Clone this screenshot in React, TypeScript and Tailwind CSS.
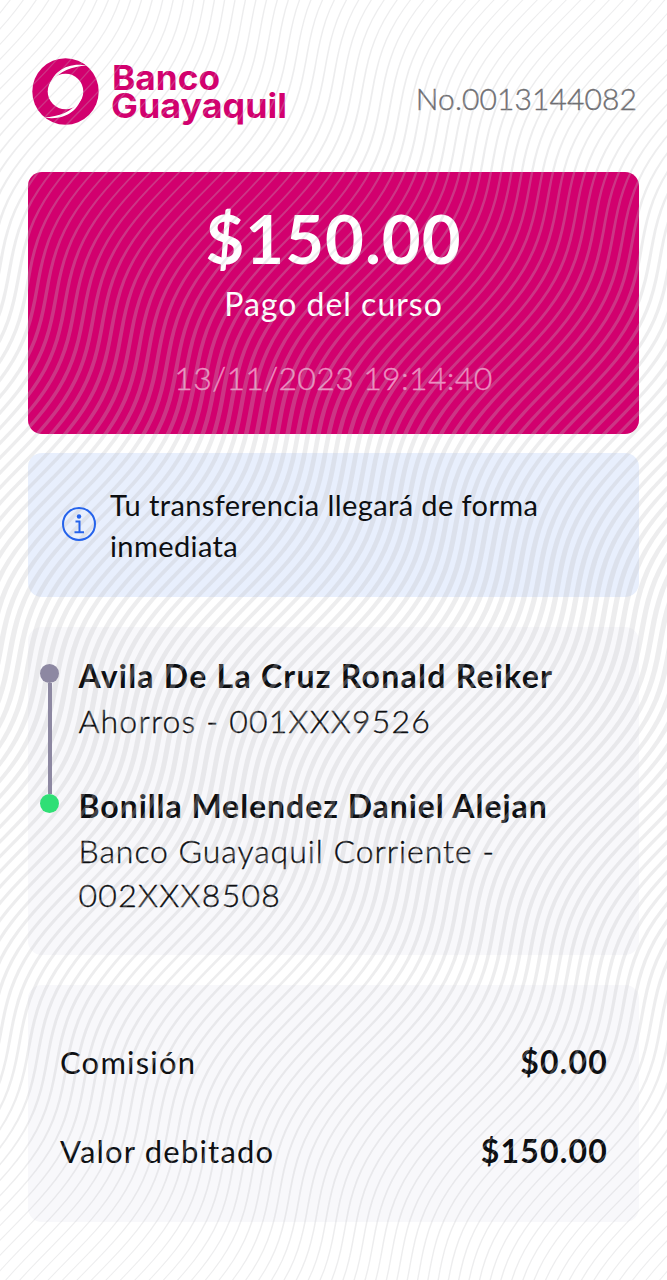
const WIDTH = 667
const HEIGHT = 1280

// Security pattern: the same wave repeated along a diagonal
const STEP_X = 9.3
const RIDGE = 0.57
const PERIOD = 288

function waveX(k: number, y: number) {
  const v = y - 266 - k * STEP_X * RIDGE
  return k * STEP_X - 0.58 * v + 0.4 * (PERIOD / (2 * Math.PI)) * Math.sin((2 * Math.PI * v) / PERIOD)
}

function waveWidth(y: number) {
  const t = Math.min(Math.max(y / HEIGHT, 0), 1)
  return 1.4 + 4 * Math.pow(Math.sin(Math.PI * t), 1.6)
}

function wavePath(k: number) {
  const left: string[] = []
  const right: string[] = []
  for (let y = -10; y <= HEIGHT + 10; y += 10) {
    const x = waveX(k, y)
    const half = waveWidth(y) / 2
    left.push(`${(x - half).toFixed(1)} ${y}`)
    right.unshift(`${(x + half).toFixed(1)} ${y}`)
  }
  return `M${left.join("L")}L${right.join("L")}Z`
}

const waves = Array.from({ length: 150 }, (_, i) => wavePath(i - 35))

function Waves() {
  return (
    <svg className="pointer-events-none absolute inset-0 z-10" width={WIDTH} height={HEIGHT} fill="#c0c0c2" fillOpacity={0.28}>
      {waves.map((d, i) => (
        <path key={i} d={d} />
      ))}
    </svg>
  )
}

function Logo() {
  return (
    <svg width="256" height="72" viewBox="0 0 256 72" fill="#d2006e" className="shrink-0">
      <circle cx="33.5" cy="34.5" r="33.2" />
      <circle cx="33.5" cy="34.5" r="17.8" fill="#fff" />
      <path d="M17 31C20 15 35 5 55 8.5C40 9.5 27 14 20 25Z" fill="#fff" />
      <path d="M17 31C20 15 35 5 55 8.5C40 9.5 27 14 20 25Z" fill="#fff" transform="rotate(180 33.5 34.5)" />
      <g className="font-['Inter'] font-bold" fontSize="33.5">
        <text x="80" y="33" textLength="108" lengthAdjust="spacingAndGlyphs">Banco</text>
        <text x="79" y="61" textLength="176" lengthAdjust="spacingAndGlyphs">Guayaquil</text>
      </g>
    </svg>
  )
}

function InfoIcon() {
  return (
    <svg width="34" height="34" viewBox="0 0 34 34" fill="none" stroke="#2563eb" strokeWidth="2" className="shrink-0">
      <circle cx="17" cy="17" r="16" />
      <circle cx="17" cy="9.5" r="2.2" fill="#2563eb" stroke="none" />
      <path d="M13.5 14.5H17.5V25M12.5 25.2H22" />
    </svg>
  )
}

export default function App() {
  return (
    <div className="relative h-[1280px] w-[667px] overflow-hidden bg-white px-7 font-['Lato',sans-serif] text-[#0d0f12]">
      <Waves />

      <header className="flex h-[172px] items-start justify-between pt-[57px] pl-1">
        <Logo />
        <span className="mt-[23px] mr-[2px] text-[30px] leading-[36px] font-light tracking-[0.1px] text-[#6e6e72] [-webkit-text-stroke:0.4px]">
          No.0013144082
        </span>
      </header>

      <section className="flex h-[262px] flex-col items-center rounded-[14px] bg-[#d2006e] pt-[26px] text-white">
        <p className="text-[67px] leading-[80px] font-bold tracking-[1px]">$150.00</p>
        <p className="mt-[6px] text-[32px] leading-[40px] tracking-[1px]">Pago del curso</p>
        <p className="mt-[34px] text-[32px] leading-[40px] font-light tracking-[0.35px] text-[#ee8cc0] [-webkit-text-stroke:0.4px]">
          13/11/2023 19:14:40
        </p>
      </section>

      <section className="mt-[19px] flex h-[144px] items-center gap-[14px] rounded-[14px] bg-[#e8effd] pl-[34px]">
        <div className="relative z-20 -mt-[2px]">
          <InfoIcon />
        </div>
        <p className="relative z-20 text-[29px] leading-[41px] tracking-[0.4px]">
          Tu transferencia llegará de forma
          <br />
          inmediata
        </p>
      </section>

      <section className="mt-[30px] flex h-[328px] rounded-[14px] bg-[#f8f8fb] pt-[28px] pl-[12px]">
        <div className="relative z-20 mt-[9px] flex w-[19px] flex-col items-center">
          <span className="size-[19px] rounded-full bg-[#8d88a2]" />
          <span className="h-[111px] w-[4px] bg-[#8d88a2]" />
          <span className="size-[19px] rounded-full bg-[#2fdf75]" />
        </div>
        <div className="-mt-px ml-[19.5px] text-[32px] leading-[44.5px]">
          <p className="font-bold tracking-[1.25px]">Avila De La Cruz Ronald Reiker</p>
          <p className="font-light tracking-[1.2px] [-webkit-text-stroke:0.4px]">Ahorros - 001XXX9526</p>
          <p className="mt-[41px] font-bold tracking-[0.95px]">Bonilla Melendez Daniel Alejan</p>
          <p className="font-light tracking-[0.95px] [-webkit-text-stroke:0.4px]">Banco Guayaquil Corriente -</p>
          <p className="font-light tracking-[1.3px] [-webkit-text-stroke:0.4px]">002XXX8508</p>
        </div>
      </section>

      <section className="mt-[30px] flex h-[237px] flex-col rounded-[14px] bg-[#f8f8fb] px-8 pt-[56px] text-[31px] leading-[42px]">
        <div className="flex justify-between">
          <span className="tracking-[1.2px]">Comisión</span>
          <span className="-mr-px text-[32px] font-bold tracking-[1.2px]">$0.00</span>
        </div>
        <div className="mt-[47px] flex justify-between">
          <span className="tracking-[1.2px]">Valor debitado</span>
          <span className="-mr-px text-[32px] font-bold tracking-[1.2px]">$150.00</span>
        </div>
      </section>
    </div>
  )
}
